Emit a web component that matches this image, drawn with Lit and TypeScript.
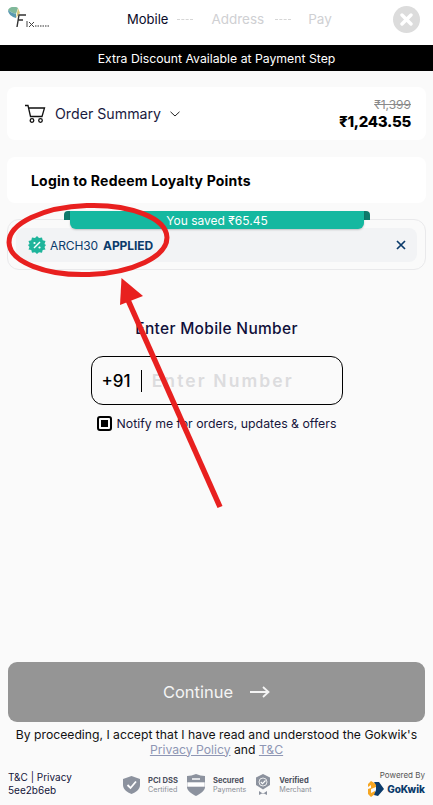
import { LitElement, html, css, svg } from "lit";
import { customElement } from "lit/decorators.js";

@customElement("app-root")
export class AppRoot extends LitElement {
  static styles = css`
    :host { display: block; width: 433px; height: 805px; position: relative; overflow: hidden; background: #fafafa;
      font-family: "Inter", "Open Sans", sans-serif; color: #000; }
    .page { display: flex; flex-direction: column; height: 805px; }
    .header { height: 45px; background: #fff; display: flex; align-items: center; padding: 0 13px 0 8px; box-sizing: border-box; }
    .logo { width: 44px; height: 22px; flex: none; margin-bottom: 9px; }
    .steps { display: flex; align-items: center; font-size: 13.5px; color: #cfd0d3; margin-left: 75px; padding-bottom: 7px; }
    .steps .on { color: #0a0a28; font-size: 13px; }
    .dash { width: 16px; border-top: 1px dashed #d6d6d6; margin: 0 18px 0 9px; }
    .dash.b { margin: 0 17px 0 11px; }
    .close { width: 27px; height: 27px; border-radius: 50%; background: #dcdcdc; display: flex; align-items: center; justify-content: center; margin: 0 0 7px auto; }
    .banner { height: 26px; background: #000; color: #fff; font-size: 12.25px; display: flex; align-items: center; justify-content: center; }
    .main { flex: 1; padding: 16px 7px 0; display: flex; flex-direction: column; }
    .card { background: #fff; border-radius: 8px; }
    .summary { height: 53px; display: flex; align-items: center; padding: 0 15px 0 17px; box-sizing: border-box; }
    .os { font-size: 14.2px; color: #1a1a40; margin-left: 9px; }
    .chev { margin-left: 9px; }
    .price { margin-left: auto; text-align: right; line-height: 1; }
    .old { font-size: 12px; color: #8a8a8a; text-decoration: line-through; }
    .new { font-size: 15px; font-weight: 800; margin-top: 3px; letter-spacing: -.3px; }
    .loyal { height: 46px; margin-top: 17px; display: flex; align-items: center; padding-left: 24px; font-size: 14px; font-weight: 700; letter-spacing: .2px; }
    .coupon { position: relative; margin-top: 16px; height: 51px; border: 1px solid #e9e9eb; border-radius: 12px; box-sizing: border-box; padding: 8px 8px; }
    .inner { height: 34px; background: #f2f3f5; border-radius: 8px; display: flex; align-items: center; padding: 0 11px 0 12px; color: #0b3b6b; font-size: 12px; }
    .code { margin-left: 4px; letter-spacing: -.1px; }
    .app { font-weight: 700; margin-left: 5px; letter-spacing: -.1px; }
    .x { margin-left: auto; }
    .tabs { position: absolute; left: 56px; top: -9px; width: 306px; height: 9px; background: #0f7a6c; border-radius: 4px 4px 0 0; }
    .ribbon { position: absolute; left: 62px; top: -9px; width: 294px; height: 18px; background: #15b8a0; color: #fff; border-radius: 0 0 6px 6px; font-size: 12px; display: flex; align-items: center; justify-content: center; box-shadow: 0 1px 2px rgba(0,0,0,.2); }
    .form { margin-top: 49px; display: flex; flex-direction: column; align-items: center; }
    .title { font-size: 15.5px; font-weight: 500; color: #10103a; line-height: 20px; letter-spacing: .3px; }
    .input { margin-top: 17px; width: 252px; height: 49px; border: 1.5px solid #000; border-radius: 12px; box-sizing: border-box; display: flex; align-items: center; padding-left: 10px; background: #fafafa; }
    .cc { font-size: 17px; font-weight: 500; }
    .sep { width: 1px; height: 22px; background: #000; margin: 0 10px; }
    .ph { font-size: 17.5px; font-weight: 600; color: #dcdcde; letter-spacing: 2.1px; }
    .notify { margin-top: 11px; display: flex; align-items: center; gap: 5px; font-size: 12.3px; color: #16163c; }
    .cb { width: 15px; height: 15px; box-sizing: border-box; border: 2px solid #000; border-radius: 3px; padding: 2px; }
    .cb i { display: block; width: 100%; height: 100%; background: #000; }
    .spacer { flex: 1; }
    .btn { margin: 0 1px; height: 60px; background: #959595; border-radius: 9px; color: #f4f4f4; display: flex; align-items: center; justify-content: center; gap: 17px; font-size: 16.5px; }
    .terms { margin-top: 6px; text-align: center; font-size: 12.2px; line-height: 14.5px; color: #111; }
    .terms a { color: #8e96b4; text-decoration: underline; }
    .footer { height: 42px; margin-top: 6px; display: flex; align-items: flex-start; padding-top: 8px; box-sizing: border-box; }
    .meta { font-size: 10px; line-height: 13px; width: 115px; color: #15153a; padding-left: 1px; }
    .badges { display: flex; gap: 9px; align-items: center; margin-top: 3px; }
    .badge { display: flex; align-items: center; gap: 8px; }
    .btxt { font-size: 7.2px; line-height: 9px; color: #8b8f97; }
    .btxt b { display: block; color: #4a4f5c; font-size: 7.6px; font-weight: 700; }
    .pow { margin-left: auto; text-align: right; font-size: 8px; color: #555; margin-top: -1px; padding-right: 1px; }
    .gk { display: flex; align-items: center; justify-content: flex-end; gap: 3px; font-size: 10px; font-weight: 800; color: #0b3b6b; margin-top: 1px; }
    .overlay { position: absolute; left: 0; top: 0; width: 433px; height: 805px; pointer-events: none; }
  `;

  render() {
    return html`
      <div class="page">
        <div class="header">
          <svg class="logo" viewBox="0 0 44 22">
            <path d="M0 3 C2 -1 8 -1 10 1 L8 7 C5 6 2 5 0 3Z" fill="#7fb89a"/>
            <path d="M0 3 C0 7 4 10 8 11 L8 7 C5 6 2 5 0 3Z" fill="#5b9ab0"/>
            <path d="M10 1 L12 6 L8 11 Z" fill="#d8c77a"/>
            <path d="M9 20 L11 8 H18 M10 13 H15" fill="none" stroke="#333" stroke-width="1.4"/>
            <path d="M19 14 V20 M21 15 L26 20 M26 15 L21 20" fill="none" stroke="#444" stroke-width="1"/>
            <path d="M27 19 H42" stroke="#777" stroke-width="1.6" stroke-dasharray="1.5 1"/>
          </svg>
          <div class="steps">
            <span class="on">Mobile</span><span class="dash"></span><span>Address</span><span class="dash b"></span><span>Pay</span>
          </div>
          <div class="close">
            <svg width="13" height="13" viewBox="0 0 13 13"><path d="M2 2 L11 11 M11 2 L2 11" stroke="#fff" stroke-width="3.4" stroke-linecap="round"/></svg>
          </div>
        </div>
        <div class="banner">Extra Discount Available at Payment Step</div>
        <div class="main">
          <div class="card summary">
            <svg width="22" height="20" viewBox="0 0 22 20" fill="none" stroke="#111" stroke-width="1.3"><path d="M1 1.5 H4 L6.5 12.5 H18 L20.5 4 H4.7"/><circle cx="8" cy="16.5" r="1.8"/><circle cx="16.5" cy="16.5" r="1.8"/></svg>
            <span class="os">Order Summary</span>
            <svg class="chev" width="10" height="6" viewBox="0 0 10 6" fill="none" stroke="#222" stroke-width="1"><path d="M.5 .8 L5 5 L9.5 .8"/></svg>
            <div class="price"><div class="old">₹1,399</div><div class="new">₹1,243.55</div></div>
          </div>
          <div class="card loyal">Login to Redeem Loyalty Points</div>
          <div class="coupon">
            <div class="tabs"></div>
            <div class="ribbon">You saved ₹65.45</div>
            <div class="inner">
              <svg width="18" height="18" viewBox="0 0 18 18">
                <path d="M9 0 L11 2 L14 1.5 L14.7 4.3 L17.5 5 L16.5 8 L18 9 L16.5 11 L17.5 13.5 L14.7 14 L14 16.8 L11 16.2 L9 18 L7 16.2 L4 16.8 L3.3 14 L.5 13.5 L1.5 11 L0 9 L1.5 8 L.5 5 L3.3 4.3 L4 1.5 L7 2Z" fill="#1eb49b"/>
                <path d="M6 12 L12 6" stroke="#fff" stroke-width="1.4"/><circle cx="6.5" cy="7" r="1.1" fill="#fff"/><circle cx="11.5" cy="11.5" r="1.1" fill="#fff"/>
              </svg>
              <span class="code">ARCH30</span><span class="app">APPLIED</span>
              <svg class="x" width="10" height="10" viewBox="0 0 10 10"><path d="M1 1 L9 9 M9 1 L1 9" stroke="#0b3b6b" stroke-width="1.7"/></svg>
            </div>
          </div>
          <div class="form">
            <div class="title">Enter Mobile Number</div>
            <div class="input"><span class="cc">+91</span><span class="sep"></span><span class="ph">Enter Number</span></div>
            <div class="notify"><span class="cb"><i></i></span><span>Notify me for orders, updates &amp; offers</span></div>
          </div>
          <div class="spacer"></div>
          <div class="btn">
            <span>Continue</span>
            <svg width="20" height="12" viewBox="0 0 20 12" fill="none" stroke="#f4f4f4" stroke-width="1.8"><path d="M0 6 H18 M13 1 L18.5 6 L13 11"/></svg>
          </div>
          <div class="terms">By proceeding, I accept that I have read and understood the Gokwik's<br/><a>Privacy Policy</a> and <a>T&amp;C</a></div>
          <div class="footer">
            <div class="meta">T&amp;C | Privacy<br/>5ee2b6eb</div>
            <div class="badges">
              <div class="badge">
                <svg width="17" height="18" viewBox="0 0 17 18"><path d="M8.5 0 L17 3 V9 C17 13 13 16.5 8.5 18 C4 16.5 0 13 0 9 V3Z" fill="#8c929e"/><path d="M4.5 9 L7.5 12 L13 5.5" fill="none" stroke="#fff" stroke-width="1.8"/></svg>
                <div class="btxt"><b>PCI DSS</b>Certified</div>
              </div>
              <div class="badge">
                <svg width="18" height="22" viewBox="0 0 18 22"><path d="M0 2 C3 2 6 1 9 0 C12 1 15 2 18 2 V13 C18 17 13 20 9 22 C5 20 0 17 0 13Z" fill="#8c929e"/><rect x="0" y="8" width="18" height="5" fill="#fff" stroke="#8c929e" stroke-width=".6"/><rect x="5" y="4" width="8" height="2" fill="#dfe1e5"/></svg>
                <div class="btxt"><b>Secured</b>Payments</div>
              </div>
              <div class="badge">
                <svg width="16" height="22" viewBox="0 0 16 22"><path d="M8 0 L15 3.5 V11 L8 15.5 L1 11 V3.5Z" fill="#8c929e"/><circle cx="8" cy="8" r="4" fill="none" stroke="#fff" stroke-width=".8"/><path d="M5.8 8 L7.5 9.7 L10.5 6.5" fill="none" stroke="#fff" stroke-width="1.1"/><path d="M4 17 L7 19 L9 19 L12 17 V21 L9 19.5 H7 L4 21Z" fill="#8c929e"/></svg>
                <div class="btxt"><b>Verified</b>Merchant</div>
              </div>
            </div>
            <div class="pow">
              Powered By
              <div class="gk">
                <svg width="17" height="16" viewBox="0 0 17 16"><path d="M4 0 L9 3 V6 L4 8 L4 4 L1 6 V3Z" fill="#f5a623"/><path d="M1 8 L4 7 V12 L8 10 V13 L4 16 L1 13Z" fill="#f5a623"/><path d="M7 1 L12 1 L17 8 L11 15 L7 14 L9 9 L9 4Z" fill="#0b3b6b"/></svg>
                GoKwik
              </div>
            </div>
          </div>
        </div>
      </div>
      <svg class="overlay" viewBox="0 0 433 805">
        ${svg`
          <ellipse cx="88" cy="240" rx="79" ry="34.5" fill="none" stroke="#e8201f" stroke-width="5" transform="rotate(-2 88 240)"/>
          <path d="M220 507 L128 300" stroke="#e8201f" stroke-width="5.5" fill="none"/>
          <path d="M121.5 278 L143 296 L120 305Z" fill="#e8201f"/>
        `}
      </svg>
    `;
  }
}
